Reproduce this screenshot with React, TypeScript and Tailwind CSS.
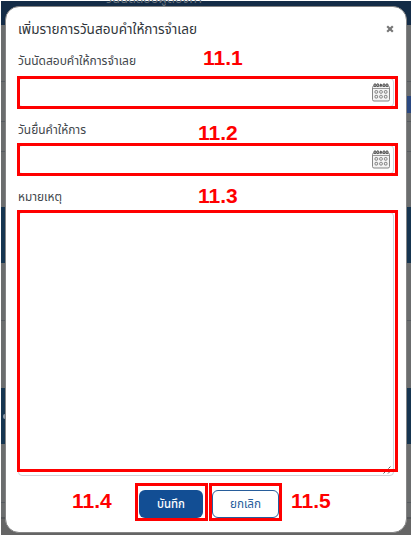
import React from "react";

const thai = "font-['Noto_Sans_Thai','Noto_Sans_Thai_Looped','Noto_Sans',sans-serif]";

function CalendarIcon() {
  return (
    <svg width="18" height="19" viewBox="0 0 18 19" fill="none" className="shrink-0">
      <rect x="0.5" y="3" width="17" height="15" rx="1.5" fill="#f4f4f4" stroke="#858585" />
      <path d="M1 5.5h16" stroke="#999" />
      {[3, 5.8, 8.9, 12, 15].map((x) => (
        <ellipse key={x} cx={x} cy="2.2" rx={x === 8.9 ? 0.5 : 1.1} ry="1.4" fill="#ccc" stroke="#3a3a3a" strokeWidth="0.9" />
      ))}
      {[8.9, 13.7].map((y) =>
        [4.3, 9, 13.7].map((x) => (
          <rect key={`${x}-${y}`} x={x - 1.3} y={y - 1.3} width="2.6" height="2.6" rx="0.8" stroke="#707070" strokeWidth="0.9" />
        )),
      )}
    </svg>
  );
}

function DateField() {
  return (
    <div className="flex h-[29px] w-[376px] items-center justify-end rounded border border-[#ced4da] bg-white pr-[3px]">
      <CalendarIcon />
    </div>
  );
}

function Label({ text, width }: { text: string; width: number }) {
  return (
    <svg width={width} height="24" className="block overflow-visible">
      <text x="0" y="17" textLength={width} lengthAdjust="spacingAndGlyphs" className={`${thai} fill-[#41464b] text-[12px]`}>
        {text}
      </text>
    </svg>
  );
}

function Backdrop() {
  return (
    <div className="flex h-full flex-col border-l border-t border-white bg-[#6b6d6e]">
      <div className="flex h-6 shrink-0 bg-[#142c47] pl-[105px]">
        <svg width="96" height="6" className="overflow-visible">
          <text x="0" y="2" textLength="96" lengthAdjust="spacingAndGlyphs" className={`${thai} fill-[#66717b] text-[12px]`}>
            วันนัดสอบผู้ต้องหา
          </text>
        </svg>
      </div>
      <div className="h-[57px] shrink-0 border-b border-[#565b60]" />
      <div className="flex h-[40px] shrink-0 items-end justify-end border-b border-[#565b60] pb-[8px]">
        <div className="h-[17px] w-2 bg-[#2a4880]" />
      </div>
      <div className="h-[30px] shrink-0 border-b border-[#565b60]" />
      <div className="h-[55px] shrink-0" />
      <div className="h-[56px] shrink-0 bg-[#163550]" />
      <div className="h-[58px] shrink-0 border-b border-[#565b60]" />
      <div className="h-[67px] shrink-0" />
      <div className="flex h-[56px] shrink-0 items-center bg-[#163550]">
        <div className="ml-[2px] h-[5px] w-1 rounded-sm bg-[#8996a5]" />
      </div>
      <div className="h-[59px] shrink-0 border-b border-[#565b60]" />
      <div className="h-[14px] shrink-0" />
      <div className="flex-1 border-t-2 border-[#54575a] bg-[#656565]" />
    </div>
  );
}

const frames = [
  "left-[17px] top-[76px] w-[381px] h-[33px]",
  "left-[17px] top-[143px] w-[381px] h-[33px]",
  "left-[17px] top-[210px] w-[381px] h-[262px]",
  "left-[135px] top-[483px] w-[73px] h-[38px]",
  "left-[209px] top-[483px] w-[73px] h-[38px]",
];

const marks = [
  { text: "11.1", place: "left-[203px] top-[46px]" },
  { text: "11.2", place: "left-[198px] top-[121px]" },
  { text: "11.3", place: "left-[198px] top-[184px]" },
  { text: "11.4", place: "left-[72px] top-[489px]" },
  { text: "11.5", place: "left-[291px] top-[489px]" },
];

export default function App() {
  return (
    <div className="relative h-[535px] w-[411px] overflow-hidden bg-white">
      <Backdrop />
      <section className="absolute left-[5px] top-[6px] flex h-[527px] w-[402px] flex-col rounded-[14px] border border-[#858585] bg-white pl-[12px]">
        <header className="flex h-[41px] items-start justify-between pr-[12px] pt-[12px]">
          <svg width="179" height="26" className="block overflow-visible">
            <text x="0" y="15" textLength="179" lengthAdjust="spacingAndGlyphs" className={`${thai} fill-[#30353a] text-[14px]`}>
              เพิ่มรายการวันสอบคำให้การจำเลย
            </text>
          </svg>
          <svg width="8" height="8" viewBox="0 0 8 8" className="mt-[6px]">
            <path d="M1.2 1.2l5.6 5.6M6.8 1.2L1.2 6.8" stroke="#777" strokeWidth="2.2" />
          </svg>
        </header>
        <div className="flex h-[67px] flex-col">
          <div className="h-[30px]"><Label text="วันนัดสอบคำให้การจำเลย" width={118} /></div>
          <DateField />
        </div>
        <div className="flex h-[67px] flex-col pt-[2px]">
          <div className="h-[28px]"><Label text="วันยื่นคำให้การ" width={68} /></div>
          <DateField />
        </div>
        <div className="flex h-[294px] flex-col pt-[2px]">
          <div className="h-[28px]"><Label text="หมายเหตุ" width={44} /></div>
          <div className="flex h-[264px] w-[376px] items-end justify-end rounded border border-[#ced4da] p-px">
            <svg width="9" height="8" viewBox="0 0 9 8">
              <path d="M0.5 7.5l7-7M5 7.5l3.5-3.5" stroke="#555" strokeDasharray="2 0.6" />
            </svg>
          </div>
        </div>
        <footer className="flex gap-[9px] pl-[121px] pt-[14px]">
          <button className="flex h-[28px] w-[64px] items-center justify-center rounded-md bg-[#124e94]">
            <svg width="28" height="20" className="overflow-visible">
              <text x="0" y="14" textLength="28" lengthAdjust="spacingAndGlyphs" className={`${thai} fill-white text-[12px] font-medium`}>บันทึก</text>
            </svg>
          </button>
          <button className="flex h-[28px] w-[67px] items-center justify-center rounded-md border border-[#275d9b] bg-white">
            <svg width="31" height="20" className="overflow-visible">
              <text x="0" y="14" textLength="31" lengthAdjust="spacingAndGlyphs" className={`${thai} fill-[#275d9b] text-[12px]`}>ยกเลิก</text>
            </svg>
          </button>
        </footer>
      </section>
      {frames.map((place) => (
        <div key={place} className={`absolute border-[3px] border-[#ff0000] ${place}`} />
      ))}
      {marks.map((m) => (
        <span key={m.text} className={`absolute font-['Liberation_Sans',Arial,sans-serif] text-[21px] leading-6 font-bold text-[#ff0000] ${m.place}`}>
          {m.text}
        </span>
      ))}
    </div>
  );
}
